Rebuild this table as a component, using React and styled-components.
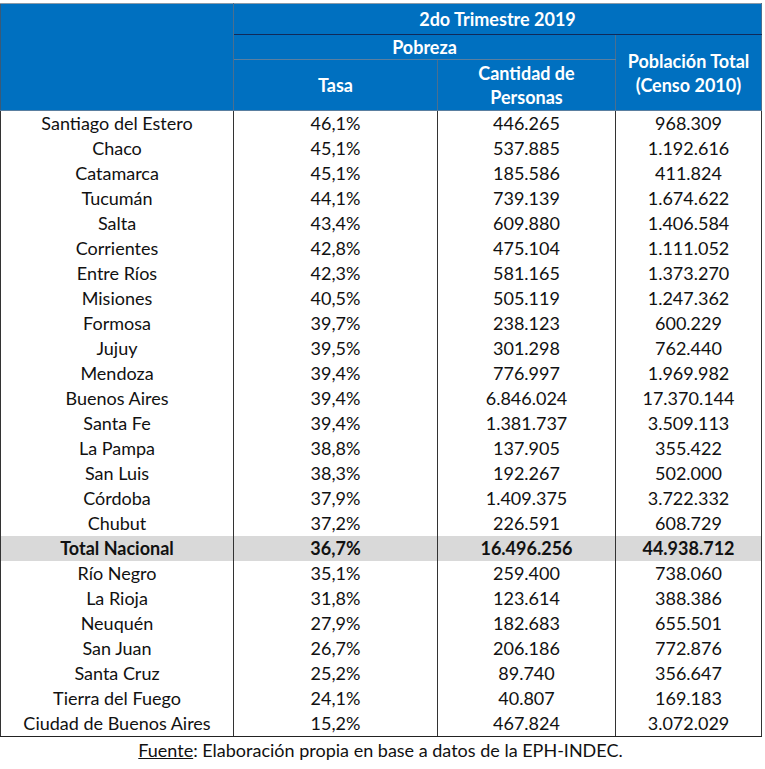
import styled, { createGlobalStyle } from "styled-components";

const GlobalStyle = createGlobalStyle`
  body {
    margin: 0;
    background: #ffffff;
    font-family: Lato, "Liberation Sans", sans-serif;
  }
`;

const Page = styled.div`
  width: 765px;
  padding-top: 3px;
`;

const Table = styled.table`
  width: 761px;
  border-collapse: collapse;
  table-layout: fixed;
  font-size: 18px;
  color: #111;
`;

const HeadCell = styled.th`
  background: #0070c0;
  color: #ffffff;
  font-weight: 700;
  font-size: 18px;
  line-height: 24px;
  text-align: center;
  padding: 0;
  height: ${(p) => p.$h || 24}px;
  border-top: ${(p) => (p.$top ? "1px solid #8a9aa8" : "none")};
  border-bottom: 1px solid ${(p) => p.$line || "#5a7fa0"};
  border-left: 1px solid ${(p) => p.$left || "#4a6f90"};
  border-right: 1px solid #4a6f90;
`;

const Cell = styled.td`
  padding: 0;
  height: 25px;
  line-height: 25px;
  text-align: center;
  white-space: nowrap;
  border-left: ${(p) => (p.$dotted ? "1px dotted #222" : "1px solid #333")};
  border-right: ${(p) => (p.$dotted ? "none" : "1px solid #333")};
  border-bottom: ${(p) => (p.$last ? "1px solid #222" : "none")};
`;

const Row = styled.tr`
  background: ${(p) => (p.$total ? "#d9d9d9" : "#ffffff")};
  font-weight: ${(p) => (p.$total ? 700 : 400)};
`;

const Footer = styled.div`
  width: 761px;
  text-align: center;
  font-size: 18px;
  line-height: 24px;
  color: #111;
  margin-top: 1px;
`;

const Under = styled.span`
  text-decoration: underline;
`;

const rows = [
  ["Santiago del Estero", "46,1%", "446.265", "968.309"],
  ["Chaco", "45,1%", "537.885", "1.192.616"],
  ["Catamarca", "45,1%", "185.586", "411.824"],
  ["Tucumán", "44,1%", "739.139", "1.674.622"],
  ["Salta", "43,4%", "609.880", "1.406.584"],
  ["Corrientes", "42,8%", "475.104", "1.111.052"],
  ["Entre Ríos", "42,3%", "581.165", "1.373.270"],
  ["Misiones", "40,5%", "505.119", "1.247.362"],
  ["Formosa", "39,7%", "238.123", "600.229"],
  ["Jujuy", "39,5%", "301.298", "762.440"],
  ["Mendoza", "39,4%", "776.997", "1.969.982"],
  ["Buenos Aires", "39,4%", "6.846.024", "17.370.144"],
  ["Santa Fe", "39,4%", "1.381.737", "3.509.113"],
  ["La Pampa", "38,8%", "137.905", "355.422"],
  ["San Luis", "38,3%", "192.267", "502.000"],
  ["Córdoba", "37,9%", "1.409.375", "3.722.332"],
  ["Chubut", "37,2%", "226.591", "608.729"],
  ["Total Nacional", "36,7%", "16.496.256", "44.938.712", true],
  ["Río Negro", "35,1%", "259.400", "738.060"],
  ["La Rioja", "31,8%", "123.614", "388.386"],
  ["Neuquén", "27,9%", "182.683", "655.501"],
  ["San Juan", "26,7%", "206.186", "772.876"],
  ["Santa Cruz", "25,2%", "89.740", "356.647"],
  ["Tierra del Fuego", "24,1%", "40.807", "169.183"],
  ["Ciudad de Buenos Aires", "15,2%", "467.824", "3.072.029"],
];

export default function App() {
  return (
    <Page>
      <GlobalStyle />
      <Table>
        <colgroup>
          <col style={{ width: 233 }} />
          <col style={{ width: 204 }} />
          <col style={{ width: 178 }} />
          <col style={{ width: 146 }} />
        </colgroup>
        <thead>
          <tr>
            <HeadCell rowSpan={3} $top $left="#3a5a78" />
            <HeadCell colSpan={3} $h={30} $top $line="#102a5a">
              2do Trimestre 2019
            </HeadCell>
          </tr>
          <tr>
            <HeadCell colSpan={2} $h={24}>
              Pobreza
            </HeadCell>
            <HeadCell rowSpan={2}>
              Población Total
              <br />
              (Censo 2010)
            </HeadCell>
          </tr>
          <tr>
            <HeadCell $h={50}>Tasa</HeadCell>
            <HeadCell $h={50}>
              Cantidad de
              <br />
              Personas
            </HeadCell>
          </tr>
        </thead>
        <tbody>
          {rows.map(([name, tasa, cant, pob, total], i) => (
            <Row key={name} $total={total}>
              <Cell $last={i === rows.length - 1}>{name}</Cell>
              <Cell $last={i === rows.length - 1}>{tasa}</Cell>
              <Cell $dotted $last={i === rows.length - 1}>
                {cant}
              </Cell>
              <Cell $last={i === rows.length - 1}>{pob}</Cell>
            </Row>
          ))}
        </tbody>
      </Table>
      <Footer>
        <Under>Fuente</Under>: Elaboración propia en base a datos de la
        EPH-INDEC.
      </Footer>
    </Page>
  );
}
